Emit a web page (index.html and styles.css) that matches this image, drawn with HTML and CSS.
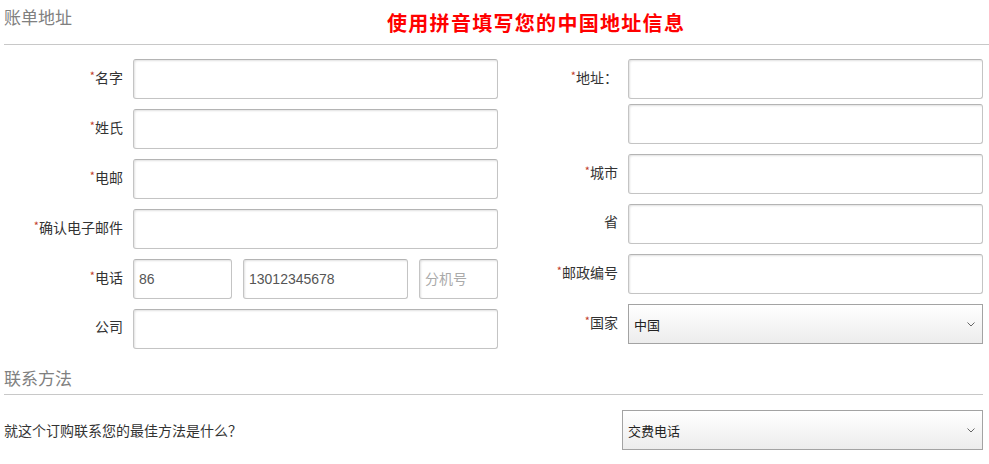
FILE: index.html
```html
<!DOCTYPE html>
<html lang="zh-CN">
<head>
<meta charset="utf-8">
<title>账单地址</title>
<link rel="stylesheet" href="styles.css">
</head>
<body>
<div class="page">
  <div class="billing-head">
    <h2 class="section-title">账单地址</h2>
    <p class="notice">使用拼音填写您的中国地址信息</p>
  </div>

  <div class="cols">
    <div class="col col-left">
      <div class="row">
        <label class="lbl lbl-left"><span class="req">*</span>名字</label>
        <input class="field" type="text">
      </div>
      <div class="row">
        <label class="lbl lbl-left"><span class="req">*</span>姓氏</label>
        <input class="field" type="text">
      </div>
      <div class="row">
        <label class="lbl lbl-left"><span class="req">*</span>电邮</label>
        <input class="field" type="text">
      </div>
      <div class="row">
        <label class="lbl lbl-left"><span class="req">*</span>确认电子邮件</label>
        <input class="field" type="text">
      </div>
      <div class="row">
        <label class="lbl lbl-left"><span class="req">*</span>电话</label>
        <div class="phone">
          <input class="field f-cc" type="text" value="86">
          <input class="field f-num" type="text" value="13012345678">
          <input class="field f-ext" type="text" placeholder="分机号">
        </div>
      </div>
      <div class="row">
        <label class="lbl lbl-left">公司</label>
        <input class="field" type="text">
      </div>
    </div>

    <div class="col col-right">
      <div class="row">
        <label class="lbl lbl-right"><span class="req">*</span>地址：</label>
        <input class="field" type="text">
      </div>
      <div class="row row-tight">
        <span class="lbl lbl-right"></span>
        <input class="field" type="text">
      </div>
      <div class="row">
        <label class="lbl lbl-right"><span class="req">*</span>城市</label>
        <input class="field" type="text">
      </div>
      <div class="row">
        <label class="lbl lbl-right">省</label>
        <input class="field" type="text">
      </div>
      <div class="row">
        <label class="lbl lbl-right"><span class="req">*</span>邮政编号</label>
        <input class="field" type="text">
      </div>
      <div class="row">
        <label class="lbl lbl-right"><span class="req">*</span>国家</label>
        <div class="select-wrap">
          <select class="select"><option>中国</option></select>
          <svg class="chev" width="8" height="5" viewBox="0 0 8 5"><path d="M0.5 0.5 L4 4 L7.5 0.5" fill="none" stroke="#666" stroke-width="1"/></svg>
        </div>
      </div>
    </div>
  </div>

  <div class="contact-head">
    <h2 class="section-title">联系方法</h2>
  </div>
  <div class="contact-row">
    <span class="question">就这个订购联系您的最佳方法是什么？</span>
    <div class="select-wrap select-wide">
      <select class="select"><option>交费电话</option></select>
      <svg class="chev" width="8" height="5" viewBox="0 0 8 5"><path d="M0.5 0.5 L4 4 L7.5 0.5" fill="none" stroke="#666" stroke-width="1"/></svg>
    </div>
  </div>
</div>
</body>
</html>
```

FILE: styles.css
```css
html, body {
  margin: 0;
  padding: 0;
  background: #fff;
}
body {
  font-family: "Noto Sans CJK SC", "Noto Sans", "Liberation Sans", sans-serif;
  font-size: 14px;
  color: #333;
}
.page {
  padding: 0 6px 0 4px;
}
.billing-head {
  display: flex;
  align-items: flex-start;
  height: 40px;
  padding-top: 4px;
  border-bottom: 1px solid #c8c8c8;
  margin-right: -6px;
}
.section-title {
  margin: 0;
  font-size: 17px;
  line-height: 26px;
  font-weight: normal;
  color: #808080;
}
.notice {
  margin: 6px 0 0 315px;
  font-size: 20px;
  line-height: 26px;
  font-weight: bold;
  color: #f00;
  letter-spacing: 1.3px;
}
.cols {
  display: flex;
  gap: 12px;
  margin-top: 14px;
}
.col {
  display: flex;
  flex-direction: column;
  gap: 10px;
}
.col-left { width: 494px; }
.col-right { width: 474px; }
.row {
  display: flex;
  align-items: center;
  height: 40px;
}
.row-tight { margin-top: -5px; }
.lbl {
  flex: none;
  text-align: right;
  font-size: 14px;
  line-height: 20px;
  padding-bottom: 6px;
  color: #333;
  white-space: nowrap;
}
.lbl-left { width: 119px; margin-right: 10px; }
.lbl-right { width: 108px; margin-right: 10px; }
.req {
  color: #c0392b;
  font-size: 11px;
  vertical-align: 3px;
}
.field {
  box-sizing: border-box;
  height: 40px;
  flex: 1;
  min-width: 0;
  margin: 0;
  padding: 0 5px;
  border: 1px solid #c4c4c4;
  border-top-color: #b4b4b4;
  border-radius: 3px;
  box-shadow: inset 1px 1px 2px rgba(0, 0, 0, 0.12);
  background: #fff;
  font-family: "Liberation Sans", "Noto Sans CJK SC", sans-serif;
  font-size: 14px;
  color: #555;
  outline: none;
}
.field::placeholder {
  color: #aaa;
  font-family: "Noto Sans CJK SC", sans-serif;
}
.phone {
  display: flex;
  gap: 11px;
  flex: 1;
  min-width: 0;
}
.f-cc { flex: none; width: 99px; }
.f-num { flex: none; width: 165px; }
.f-ext { flex: 1; }
.select-wrap {
  position: relative;
  flex: 1;
  height: 40px;
}
.select {
  box-sizing: border-box;
  width: 100%;
  height: 40px;
  margin: 0;
  padding: 0 5px;
  -webkit-appearance: none;
  appearance: none;
  border: 1px solid #a3a3a3;
  border-radius: 0;
  background: linear-gradient(#ffffff, #ececec);
  font-family: "Noto Sans CJK SC", sans-serif;
  font-size: 13px;
  color: #222;
  outline: none;
}
.chev {
  position: absolute;
  right: 8px;
  top: 18px;
}
.contact-head {
  margin-top: 16px;
  padding-bottom: 3px;
  border-bottom: 1px solid #c8c8c8;
}
.contact-row {
  display: flex;
  align-items: center;
  justify-content: space-between;
  margin-top: 15px;
}
.question {
  font-size: 14px;
  color: #333;
}
.select-wide {
  flex: none;
  width: 361px;
}
```
